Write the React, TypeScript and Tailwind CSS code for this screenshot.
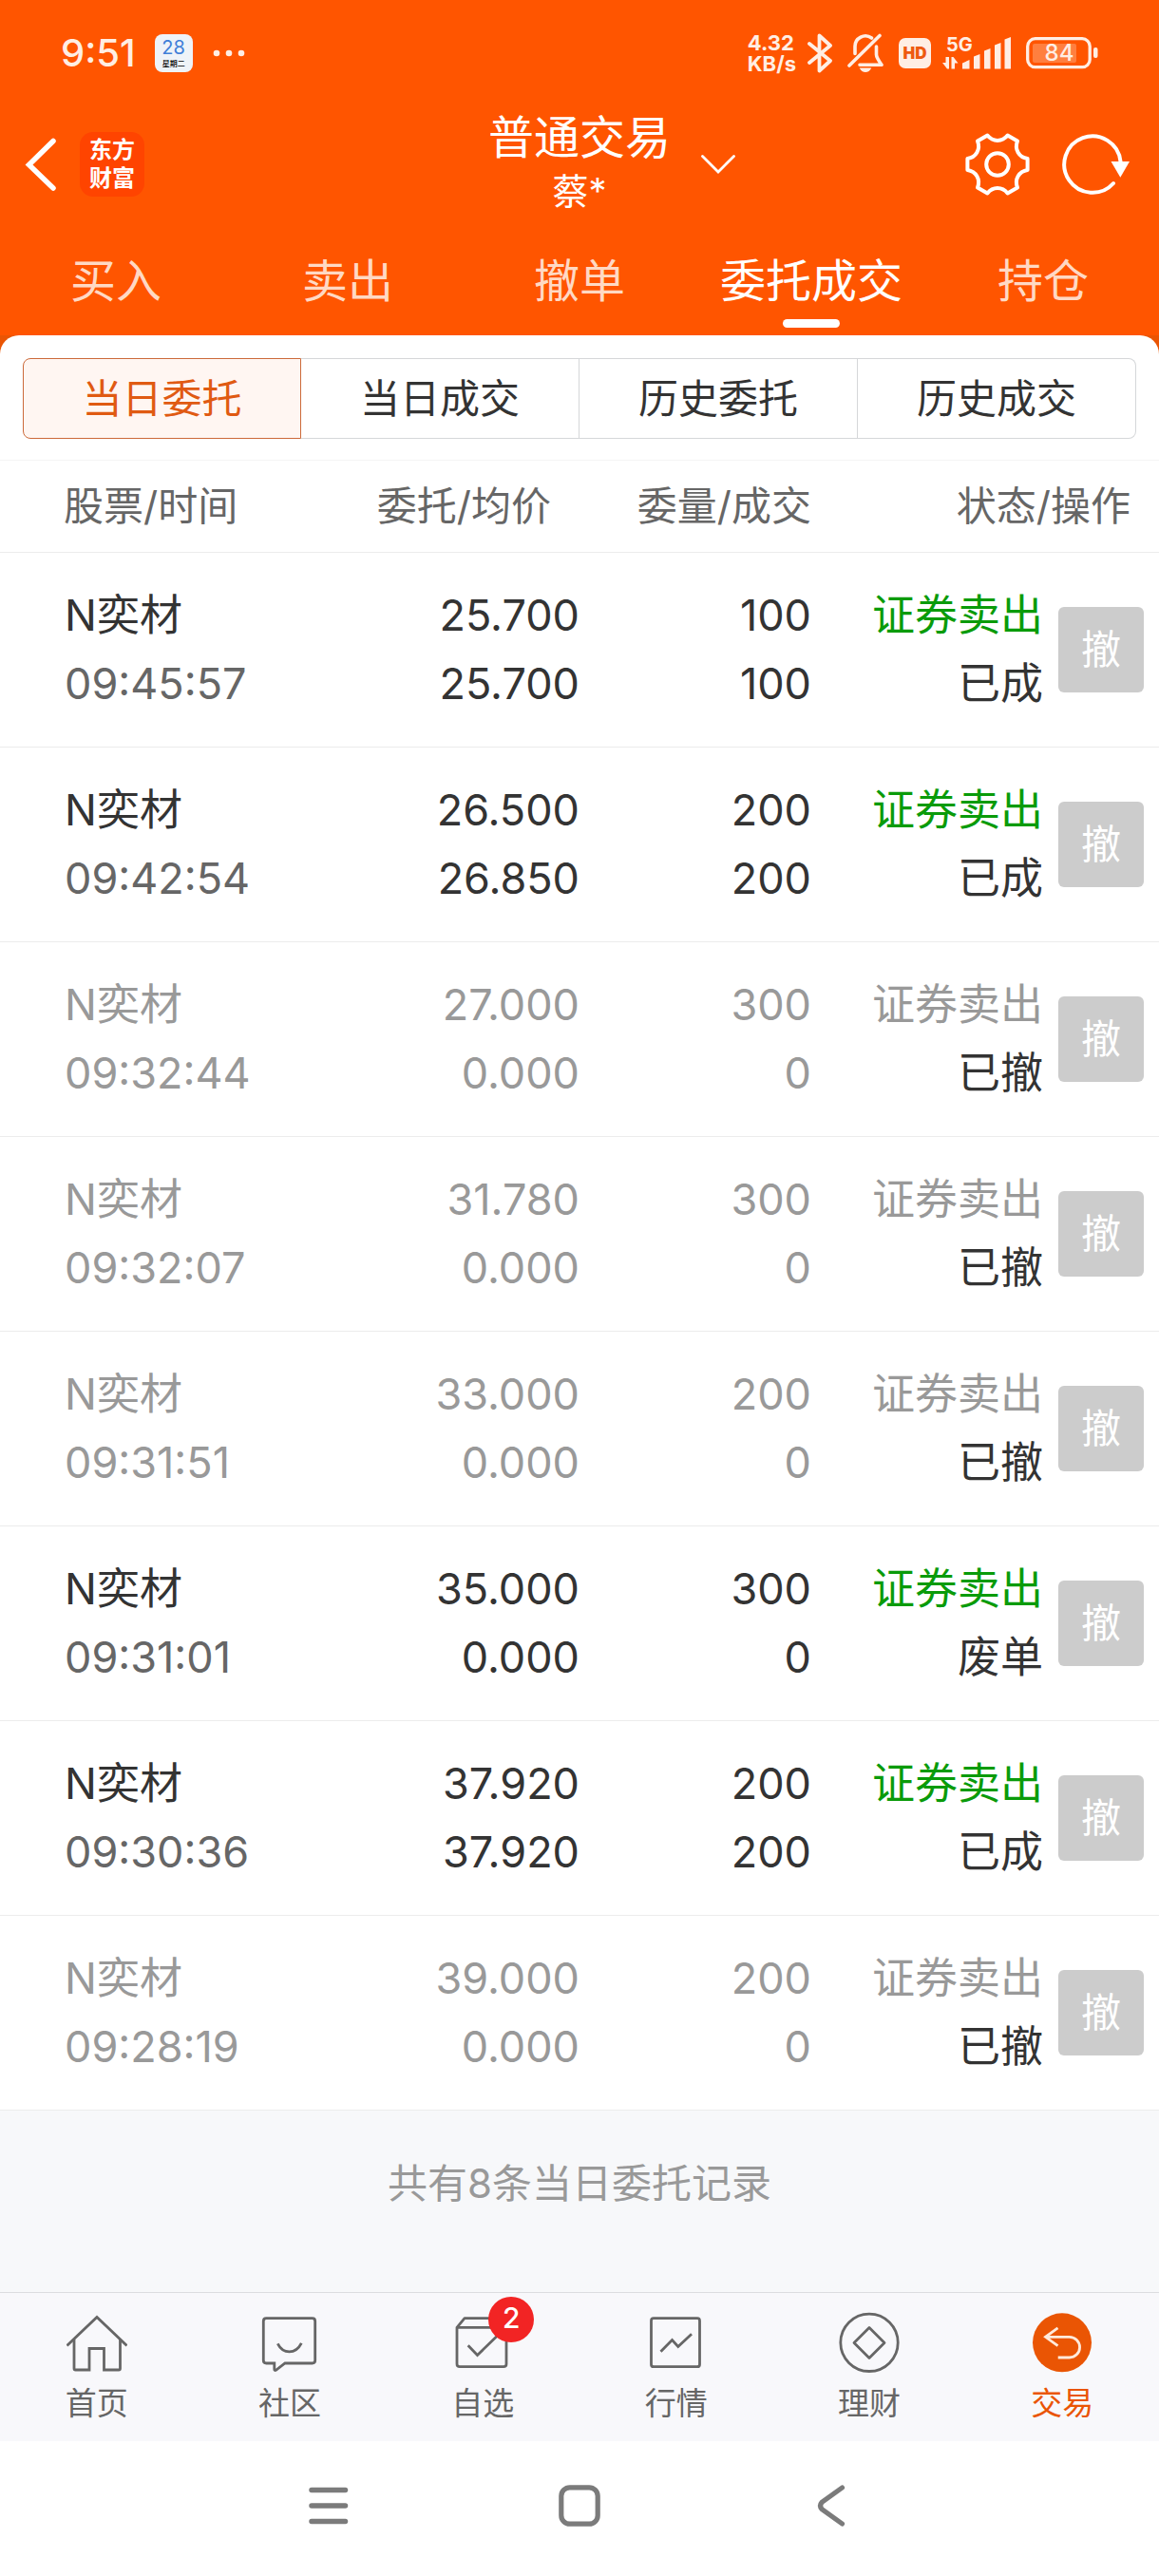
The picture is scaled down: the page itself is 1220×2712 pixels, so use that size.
import { useState } from 'react';
import type { ReactNode } from 'react';
import clsx from 'clsx';

interface Order {
  name: string;
  time: string;
  price: string;
  avgPrice: string;
  amount: string;
  filled: string;
  status: string;
}

const ORDERS: Order[] = [
  { name: 'N奕材', time: '09:45:57', price: '25.700', avgPrice: '25.700', amount: '100', filled: '100', status: '已成' },
  { name: 'N奕材', time: '09:42:54', price: '26.500', avgPrice: '26.850', amount: '200', filled: '200', status: '已成' },
  { name: 'N奕材', time: '09:32:44', price: '27.000', avgPrice: '0.000', amount: '300', filled: '0', status: '已撤' },
  { name: 'N奕材', time: '09:32:07', price: '31.780', avgPrice: '0.000', amount: '300', filled: '0', status: '已撤' },
  { name: 'N奕材', time: '09:31:51', price: '33.000', avgPrice: '0.000', amount: '200', filled: '0', status: '已撤' },
  { name: 'N奕材', time: '09:31:01', price: '35.000', avgPrice: '0.000', amount: '300', filled: '0', status: '废单' },
  { name: 'N奕材', time: '09:30:36', price: '37.920', avgPrice: '37.920', amount: '200', filled: '200', status: '已成' },
  { name: 'N奕材', time: '09:28:19', price: '39.000', avgPrice: '0.000', amount: '200', filled: '0', status: '已撤' },
];

const TRADE_TABS = ['买入', '卖出', '撤单', '委托成交', '持仓'];
const RECORD_TABS = ['当日委托', '当日成交', '历史委托', '历史成交'];

function StatusBar() {
  return (
    <div className="flex h-28 items-center justify-between pl-16 pr-16 text-[#ffeee4]">
      <div className="flex items-center gap-5">
        <span className="text-[40px] leading-none font-medium">9:51</span>
        <div className="flex size-10 flex-col items-center justify-center rounded-lg bg-[#eef3f8]">
          <span className="text-[20px] leading-[22px] text-[#3f7fd8]">28</span>
          <span className="text-[8px] leading-[12px] font-medium text-black">星期二</span>
        </div>
        <svg className="h-2 w-9" viewBox="0 0 36 8" fill="currentColor">
          <circle cx="5" cy="4" r="3.3" />
          <circle cx="18" cy="4" r="3.3" />
          <circle cx="31" cy="4" r="3.3" />
        </svg>
      </div>

      <div className="flex items-center gap-3">
        <div className="text-[22px] leading-[22px] font-bold">
          <div>4.32</div>
          <div>KB/s</div>
        </div>
        <svg className="h-[42px] w-[26px]" viewBox="0 0 26 42" fill="none" stroke="currentColor" strokeWidth="3.8" strokeLinecap="round" strokeLinejoin="round">
          <path d="M2 11 24 29 12.5 39.5V2.5L24 13 2 31" />
        </svg>
        <svg className="mx-1 h-[42px] w-[38px]" viewBox="0 0 38 42" fill="none" stroke="currentColor" strokeWidth="3.6" strokeLinecap="round" strokeLinejoin="round">
          <path d="M34 2.5 2 34" />
          <path d="M8 21.5V14A11 11 0 0 1 25.5 5" />
          <path d="M30.5 14v8.5q0 3 5.5 10.8H13" />
          <path d="M12.7 36.5h12.6Q23 41 19 41t-6.3-4.5Z" fill="currentColor" stroke="none" />
        </svg>
        <div className="flex h-8 w-[34px] items-center justify-center rounded-[7px] bg-[#ffeee4] text-[17px] leading-none font-black text-[#ee5a10]">
          HD
        </div>
        <div className="relative h-9 w-[72px]">
          <svg className="size-full" viewBox="0 0 72 36" fill="currentColor">
            <path d="M21 28.5 28.5 25v9.5H21ZM33 21.500l6.500-2.500v15.500H33ZM44 15.500l6.500-2.500v21.500H44ZM55 9.500 61.500 7v27.500H55ZM65.500 3.500 72 1v33.500h-6.500Z" />
            <path d="M3.500 22H7v12.500H5L0 28h3.500ZM9.500 22h2l5 6.500H13v6H9.500Z" />
          </svg>
          <span className="absolute top-0 left-1 text-[20px] leading-[18px] font-bold">5G</span>
        </div>
        <div className="relative ml-1 h-[34px] w-[76px]">
          <svg className="size-full" viewBox="0 0 76 34" fill="none">
            <rect x="1.7" y="1.7" width="65.5" height="30" rx="8" stroke="currentColor" strokeWidth="3.3" />
            <rect x="7" y="7" width="46" height="20" rx="2" fill="currentColor" opacity="0.28" />
            <rect x="71" y="11" width="4.5" height="11" rx="2" fill="currentColor" />
          </svg>
          <span className="absolute inset-y-0 left-0 w-[70px] text-center text-2xl leading-[34px] font-medium">84</span>
        </div>
      </div>
    </div>
  );
}

function TitleBar() {
  return (
    <div className="grid h-[122px] grid-cols-[1fr_auto_1fr] items-center text-white">
      <div className="flex items-center gap-6 pl-6">
        <button aria-label="返回">
          <svg className="h-14 w-9" viewBox="0 0 36 56" fill="none" stroke="currentColor" strokeWidth="5.5" strokeLinecap="round">
            <path d="M32 3.5 6.5 28.5 32 53" />
          </svg>
        </button>
        <div className="flex size-[68px] flex-col items-center justify-center rounded-[14px] bg-[#ff4400] text-[24px] leading-[30px] font-bold">
          <span>东方</span>
          <span>财富</span>
        </div>
      </div>

      <div className="text-center">
        <h1 className="text-[48px] leading-[56px]">普通交易</h1>
        <p className="text-[38px] leading-[56px]">蔡*</p>
      </div>

      <div className="flex items-center justify-between pr-7 pl-8">
        <button aria-label="切换账户">
          <svg className="h-5 w-9" viewBox="0 0 36 20" fill="none" stroke="currentColor" strokeWidth="2.8" strokeLinecap="round">
            <path d="M1.5 1.5 18 18 34.5 1.5" />
          </svg>
        </button>
        <div className="flex gap-8">
          <button aria-label="设置">
            <svg className="size-[68px]" viewBox="-34 -34 68 68" fill="none" stroke="currentColor" strokeWidth="4" strokeLinejoin="round">
              <path d="M-10.6-30.4C-4.9-23.2 4.9-23.2 10.6-30.4L21-24.4C17.6-15.9 22.5-7.3 31.6-6V6C22.5 7.3 17.6 15.9 21 24.4L10.6 30.4C4.9 23.2-4.9 23.2-10.6 30.4L-21 24.4C-17.6 15.9-22.5 7.3-31.6 6V-6C-22.5-7.3-17.6-15.9-21-24.4Z" />
              <circle r="11.8" />
            </svg>
          </button>
          <button aria-label="刷新">
            <svg className="h-[68px] w-[76px]" viewBox="-34 -34 76 68" fill="none">
              <path d="M22 20A29.7 29.7 0 1 1 29.5-3" stroke="currentColor" strokeWidth="4" strokeLinecap="round" />
              <path d="M19.5-3H39L29.3 13.7Z" fill="currentColor" />
            </svg>
          </button>
        </div>
      </div>
    </div>
  );
}

function OrderRow({ order }: { order: Order }) {
  const cancelled = order.status === '已撤';

  return (
    <tr
      className={clsx(
        'h-[205px] border-b border-[#ececec] text-[45px] leading-[72px]',
        cancelled ? 'text-[#999]' : 'text-[#333]'
      )}
    >
      <td className="pl-[68px]">
        <div>{order.name}</div>
        <div className={cancelled ? 'text-[#999]' : 'text-[#666]'}>{order.time}</div>
      </td>
      <td className="text-right">
        <div>{order.price}</div>
        <div>{order.avgPrice}</div>
      </td>
      <td className="text-right">
        <div>{order.amount}</div>
        <div>{order.filled}</div>
      </td>
      <td>
        <div className="flex items-center justify-end gap-4 pr-4">
          <div className="text-right">
            <div className={cancelled ? 'text-[#999]' : 'text-[#0a9b0a]'}>证券卖出</div>
            <div className="text-[#333]">{order.status}</div>
          </div>
          <button disabled className="size-[90px] rounded-md bg-[#ccc] text-[42px] leading-none text-white">
            撤
          </button>
        </div>
      </td>
    </tr>
  );
}

function NavIcon({ children }: { children: ReactNode }) {
  return (
    <svg className="size-16" viewBox="0 0 64 64" fill="none" stroke="currentColor" strokeWidth="2.8">
      {children}
    </svg>
  );
}

const NAV_ITEMS: { label: string; icon: ReactNode; badge?: number }[] = [
  {
    label: '首页',
    icon: (
      <NavIcon>
        <path d="M.5 35.5 32 5.5 63.5 35.5" />
        <path d="M8 29v30.500q0 1.500 1.500 1.500H24V38.500h15.500V61H55q1.500 0 1.500-1.500V29" />
      </NavIcon>
    ),
  },
  {
    label: '社区',
    icon: (
      <NavIcon>
        <path d="M7.3 6.7h48.400q3 0 3 3V51q0 3-3 3H27l-9.500 7.300q-1.700.700-1.700-1V54H7.300q-3 0-3-3V9.700q0-3 3-3Z" />
        <path d="M19.3 33.3q4.200 8.500 12.300 8.500t12.700-9" />
      </NavIcon>
    ),
  },
  {
    label: '自选',
    icon: (
      <NavIcon>
        <path d="M5 16.3v38.400q0 3 3 3h46q3 0 3-3V16.300ZM5 16.300l8-9.600h36l8 9.600" strokeLinejoin="round" />
        <path d="M16.7 35.3 26.500 45.500 47.300 25.300" />
      </NavIcon>
    ),
    badge: 2,
  },
  {
    label: '行情',
    icon: (
      <NavIcon>
        <rect x="5.5" y="6.7" width="51" height="51" rx="2.5" />
        <path d="M15.5 41.7 27.5 29.5l6.300 7L48 23.300" />
      </NavIcon>
    ),
  },
  {
    label: '理财',
    icon: (
      <NavIcon>
        <circle cx="32" cy="32.3" r="30.2" />
        <path d="M32 16.5 48 32.5 32 48.5 16 32.5Z" strokeLinejoin="round" />
      </NavIcon>
    ),
  },
  {
    label: '交易',
    icon: (
      <NavIcon>
        <circle cx="32" cy="32.3" r="31" fill="currentColor" stroke="none" />
        <path d="M27.5 16.8 14.5 26.3l13 9.400M14.500 26.300h25.200a10.800 10.800 0 0 1 0 21.700H27.700" stroke="#ffeadb" />
      </NavIcon>
    ),
  },
];

function BottomNav() {
  return (
    <nav className="grid h-[157px] grid-cols-6 border-t border-[#dcdde0] bg-[#f8f8fb]">
      {NAV_ITEMS.map((item) => (
        <a
          key={item.label}
          href="#"
          className={clsx(
            'flex flex-col items-center pt-5',
            item.label === '交易' ? 'text-[#ea5504]' : 'text-[#666]'
          )}
        >
          <span className="relative">
            {item.icon}
            {item.badge && (
              <span className="absolute -top-4 left-[38px] flex size-12 items-center justify-center rounded-full bg-[#f22424] pb-1 text-[30px] leading-none font-medium text-white">
                {item.badge}
              </span>
            )}
          </span>
          <span className="mt-2 text-[33px] leading-[48px]">{item.label}</span>
        </a>
      ))}
    </nav>
  );
}

function SystemNav() {
  return (
    <div className="h-[142px] bg-white pt-11 text-[#7b7b7b]">
      <div className="mx-auto grid w-[65%] grid-cols-3 justify-items-center">
        <button aria-label="最近任务">
          <svg className="size-12" viewBox="0 0 48 48" fill="none" stroke="currentColor" strokeWidth="5.5" strokeLinecap="round">
            <path d="M6 7.5h35.500M6 24h35.500M6 40.500h35.500" />
          </svg>
        </button>
        <button aria-label="主屏幕">
          <svg className="size-12" viewBox="0 0 48 48" fill="none" stroke="currentColor" strokeWidth="5.2">
            <rect x="4.8" y="4.8" width="38.4" height="38.4" rx="9" />
          </svg>
        </button>
        <button aria-label="后退">
          <svg className="size-12" viewBox="0 0 48 48" fill="none" stroke="currentColor" strokeWidth="5.2" strokeLinecap="round">
            <path d="M36.5 5 15 20.5q-3 3.500 0 7L36.500 43" />
          </svg>
        </button>
      </div>
    </div>
  );
}

export default function App() {
  const [tradeTab, setTradeTab] = useState('委托成交');
  const [recordTab, setRecordTab] = useState('当日委托');

  return (
    <div className="flex min-h-screen flex-col bg-[#f7f8fa] font-['Inter','Noto_Sans_CJK_SC',sans-serif]">
      <header className="bg-[#ff5500]">
        <StatusBar />
        <TitleBar />
        <div className="grid h-[119px] grid-cols-5">
          {TRADE_TABS.map((tab) => (
            <button
              key={tab}
              onClick={() => setTradeTab(tab)}
              className={clsx('relative pt-1 text-[48px] leading-none', tab === tradeTab ? 'text-white' : 'text-[#ffd9c4]')}
            >
              {tab}
              {tab === tradeTab && (
                <span className="absolute bottom-2 left-1/2 h-[9px] w-[60px] -translate-x-1/2 rounded-full bg-white" />
              )}
            </button>
          ))}
        </div>
      </header>

      <main className="bg-[#ea5504]">
        <div className="rounded-t-[20px] bg-white">
          <div className="grid grid-cols-4 px-6 pt-6 pb-[22px]">
            {RECORD_TABS.map((tab) => (
              <button
                key={tab}
                onClick={() => setRecordTab(tab)}
                className={clsx(
                  'h-[85px] border text-[42px] leading-none first:rounded-l-lg last:rounded-r-lg',
                  tab === recordTab
                    ? 'border-[#cc6a3a] bg-[#fff6f2] text-[#e05a12]'
                    : 'border-l-0 border-[#d5d7d9] text-[#333]'
                )}
              >
                {tab}
              </button>
            ))}
          </div>

          <table className="w-full table-fixed">
            <colgroup>
              <col className="w-[25%]" />
              <col className="w-[25%]" />
              <col className="w-[20%]" />
              <col className="w-[30%]" />
            </colgroup>
            <thead>
              <tr className="h-[97px] border-y border-t-[#f5f5f5] border-b-[#ececec] text-[42px] leading-none text-[#666]">
                <th className="pl-[67px] text-left font-normal">股票/时间</th>
                <th className="pr-[30px] text-right font-normal">委托/均价</th>
                <th className="text-right font-normal">委量/成交</th>
                <th className="pr-[30px] text-right font-normal">状态/操作</th>
              </tr>
            </thead>
            <tbody>
              {ORDERS.map((order) => (
                <OrderRow key={order.time} order={order} />
              ))}
            </tbody>
          </table>
        </div>
      </main>

      <p className="flex-1 pt-11 text-center text-[42px] leading-[66px] text-[#999]">
        共有{ORDERS.length}条当日委托记录
      </p>

      <BottomNav />
      <SystemNav />
    </div>
  );
}
